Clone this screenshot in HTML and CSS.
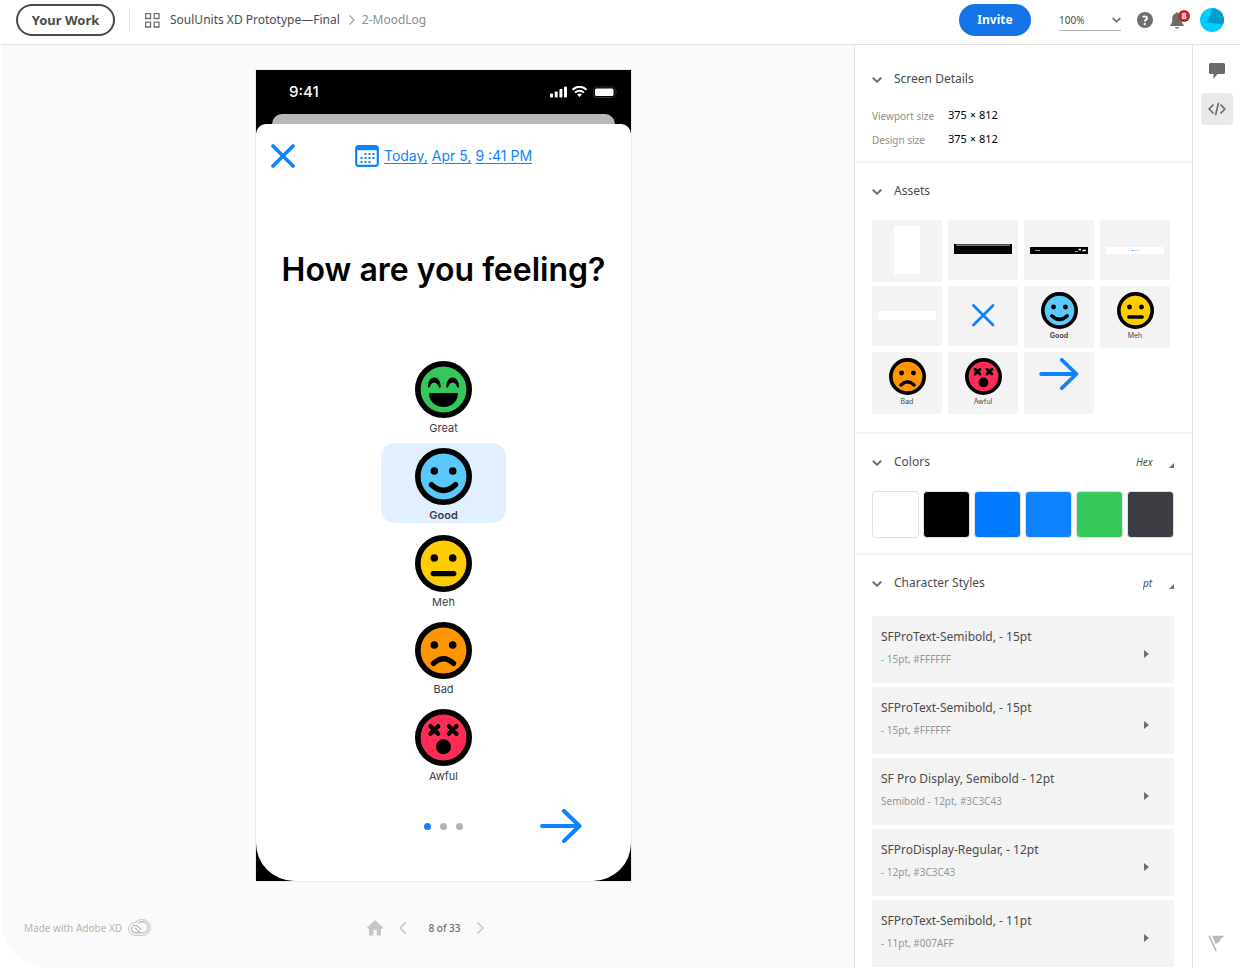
FILE: index.html
```html
<!DOCTYPE html>
<html lang="en">
<head>
<meta charset="utf-8">
<meta name="viewport" content="width=device-width, initial-scale=1">
<title>SoulUnits XD Prototype—Final</title>
<link rel="stylesheet" href="styles.css">
</head>
<body>
<svg class="sprite" aria-hidden="true">
  <symbol id="face-great" viewBox="0 0 57 57">
    <circle cx="28.5" cy="28.5" r="25.7" fill="#34c759" stroke="#000" stroke-width="5.6"/>
    <path d="M13 25.500C13 20 16 16.600 19.300 16.600S25.700 20 25.700 25.500c.1 1.600-1.200 1.600-2 .2-2-5.600-6.800-5.600-8.800 0-.7 1.400-2 1.400-1.900-.2zM31.300 25.500c0-5.500 3-8.900 6.300-8.900s6.400 3.400 6.400 8.900c.1 1.600-1.200 1.600-2 .2-2-5.600-6.800-5.600-8.800 0-.7 1.400-2 1.400-1.900-.2z"/>
    <path d="M15.500 32h26a1.500 1.500 0 0 1 1.500 1.800C42 41 36.500 46 28.500 46S15 41 14 33.800a1.500 1.500 0 0 1 1.500-1.800z"/>
  </symbol>
  <symbol id="face-good" viewBox="0 0 57 57">
    <circle cx="28.5" cy="28.5" r="25.7" fill="#5ac8fa" stroke="#000" stroke-width="5.6"/>
    <circle cx="19.300" cy="23" r="3.800"/><circle cx="37.700" cy="23" r="3.800"/>
    <path d="M16.500 36.700q12 11.200 24 0" fill="none" stroke="#000" stroke-width="5.400" stroke-linecap="round"/>
  </symbol>
  <symbol id="face-meh" viewBox="0 0 57 57">
    <circle cx="28.5" cy="28.5" r="25.7" fill="#ffcc00" stroke="#000" stroke-width="5.6"/>
    <circle cx="19.300" cy="23" r="3.800"/><circle cx="37.700" cy="23" r="3.800"/>
    <path d="M18.200 38.600h20.600" stroke="#000" stroke-width="5.200" stroke-linecap="round"/>
  </symbol>
  <symbol id="face-bad" viewBox="0 0 57 57">
    <circle cx="28.5" cy="28.5" r="25.7" fill="#ff9500" stroke="#000" stroke-width="5.6"/>
    <circle cx="19.300" cy="23" r="3.800"/><circle cx="37.700" cy="23" r="3.800"/>
    <path d="M18.300 41.500q10.200-9.600 20.400 0" fill="none" stroke="#000" stroke-width="5.200" stroke-linecap="round"/>
  </symbol>
  <symbol id="face-awful" viewBox="0 0 57 57">
    <circle cx="28.5" cy="28.5" r="25.7" fill="#ff2d55" stroke="#000" stroke-width="5.6"/>
    <path d="M15.500 17.200l7.600 7.600m0-7.600l-7.600 7.600M33.900 17.200l7.600 7.600m0-7.600l-7.600 7.600" stroke="#000" stroke-width="4.400" stroke-linecap="round"/>
    <circle cx="28.500" cy="37.700" r="7.500"/>
  </symbol>
  <symbol id="cross" viewBox="0 0 24 24"><path d="M2 2l20 20M22 2L2 22" fill="none" stroke="#0f82ff" stroke-width="3.600" stroke-linecap="round"/></symbol>
  <symbol id="arrow" viewBox="0 0 42 34"><path d="M2 17h37M24 2l15.500 15L24 32" fill="none" stroke="#0f82ff" stroke-width="4" stroke-linecap="round" stroke-linejoin="round"/></symbol>
  <symbol id="chevron" viewBox="0 0 10 6"><path d="M.8.8L5 4.800 9.200.8" fill="none" stroke="currentColor" stroke-width="1.900"/></symbol>
</svg>

<div class="app">
  <header class="topbar">
    <button class="pill pill-outline" type="button">Your Work</button>
    <span class="divider"></span>
    <nav class="crumbs" aria-label="Breadcrumb">
      <button class="icon-button" type="button" aria-label="All screens">
        <svg width="15" height="15" viewBox="0 0 15 15" fill="none" stroke="#6e6e6e" stroke-width="1.300"><path d="M.7.700h4.800v4.800H.7zM9.200.700H14v4.800H9.200zM.7 9.200h4.800V14H.7zM9.200 9.200H14V14H9.200z"/></svg>
      </button>
      <a href="#project">SoulUnits XD Prototype—Final</a>
      <svg width="6" height="10" viewBox="0 0 6 10" fill="none" stroke="#a0a0a0" stroke-width="1.200"><path d="M.5.500L5 5 .5 9.500"/></svg>
      <span class="crumb-current">2-MoodLog</span>
    </nav>
    <div class="top-actions">
      <button class="pill pill-primary" type="button">Invite</button>
      <label class="zoom">
        <select aria-label="Zoom"><option>100%</option></select>
        <svg width="9" height="6"><use href="#chevron"/></svg>
      </label>
      <button class="icon-button" type="button" aria-label="Help">
        <svg width="16" height="16" viewBox="0 0 16 16"><circle cx="8" cy="8" r="8" fill="#6e6e6e"/><path d="M5.700 5.100C6.700 4.200 9.800 3.700 10 6c.1 1.500-2.200 1.900-2.200 3.600" fill="none" stroke="#fff" stroke-width="1.900"/><circle cx="7.800" cy="12.100" r="1.200" fill="#fff"/></svg>
      </button>
      <button class="icon-button bell" type="button" aria-label="Notifications">
        <svg width="14" height="17" viewBox="0 0 14 17" fill="#6e6e6e"><path d="M6 1.200a1 1 0 0 1 2 0C10.800 1.800 11.700 4 11.700 6.500c0 4 .8 5.300 2.100 6.400v1H.2v-1c1.300-1.100 2.100-2.400 2.100-6.400C2.300 4 3.200 1.800 6 1.200zM5 15h4c-.3 1-1.100 1.500-2 1.500S5.300 16 5 15z"/></svg>
        <span class="badge">8</span>
      </button>
      <button class="icon-button" type="button" aria-label="Account">
        <svg width="24" height="24" viewBox="0 0 24 24"><clipPath id="avatar-clip"><circle cx="12" cy="12" r="12"/></clipPath><g clip-path="url(#avatar-clip)"><path fill="#00cdff" d="M0 0h24v24H0z"/><path fill="#009fc7" d="M7 14.500L12.500 0H24v16.500z"/><path fill="#17b0d4" d="M12.500 0H24v7z"/></g></svg>
      </button>
    </div>
  </header>

  <div class="workspace">
    <main class="canvas">
      <div class="stage">
        <article class="phone">
          <div class="status">
            <span>9:41</span>
            <svg width="67" height="12" viewBox="0 0 67 12" fill="#fff">
              <rect x="0" y="7.500" width="3" height="4" rx=".8"/><rect x="4.700" y="5.500" width="3" height="6" rx=".8"/><rect x="9.400" y="3" width="3" height="8.500" rx=".8"/><rect x="14" y=".5" width="3" height="11" rx=".8"/>
              <path d="M22.500 3.800q7-6.200 14 0M25 6.600q4.500-3.900 9 0" fill="none" stroke="#fff" stroke-width="1.900"/><path d="M27 8.400q2.500-1.800 5 0L29.500 11z"/>
              <rect x="43.500" y="1" width="21.500" height="10.500" rx="2.600" fill="none" stroke="#333"/><rect x="45" y="2.500" width="18.500" height="7.500" rx="1.500"/><path d="M66 4.500q1.200 1.500 0 3z" fill="#555"/>
            </svg>
          </div>
          <div class="peek"></div>
          <div class="sheet">
            <div class="sheet-top">
              <button class="icon-button" type="button" aria-label="Close"><svg width="24" height="24"><use href="#cross"/></svg></button>
              <a class="date" href="#date">
                <svg width="24" height="22" viewBox="0 0 24 22"><rect x="1.200" y="1.200" width="21.600" height="19.600" rx="2.600" fill="#fff" stroke="#0f82ff" stroke-width="2.200"/><path d="M1 5.200V3a2 2 0 0 1 2-2h18a2 2 0 0 1 2 2v2.200z" fill="#0f82ff"/><path d="M9.500 9h10.500M5.500 13h14.500M5.500 17h10.500" stroke="#0f82ff" stroke-width="2" stroke-dasharray="2 2"/></svg>
                <span>Today,</span><span>Apr 5,</span><span>9 :41 PM</span>
              </a>
            </div>
            <h1>How are you feeling?</h1>
            <div class="moods">
              <button class="mood" type="button"><svg><use href="#face-great"/></svg>Great</button>
              <button class="mood mood-selected" type="button" aria-pressed="true"><svg><use href="#face-good"/></svg>Good</button>
              <button class="mood" type="button"><svg><use href="#face-meh"/></svg>Meh</button>
              <button class="mood" type="button"><svg><use href="#face-bad"/></svg>Bad</button>
              <button class="mood" type="button"><svg><use href="#face-awful"/></svg>Awful</button>
            </div>
            <div class="sheet-bottom">
              <div class="dots"><i class="dot dot-on"></i><i class="dot"></i><i class="dot"></i></div>
              <button class="icon-button next" type="button" aria-label="Next"><svg width="42" height="34"><use href="#arrow"/></svg></button>
            </div>
          </div>
        </article>
      </div>
      <footer class="canvas-footer">
        <a class="made-with" href="#xd">Made with Adobe XD
          <svg width="23" height="17" viewBox="0 0 23 17" fill="none" stroke="#b3b3b3" stroke-width=".8"><path d="M7 16.300A6.300 6.300 0 0 1 .6 10 6.300 6.300 0 0 1 7 3.600 8.300 8.300 0 0 1 14.300.6a7.800 7.800 0 0 1 8.100 7.900 7.800 7.800 0 0 1-7.900 7.800z"/><path d="M12.800 13.600H7.400A3.700 3.700 0 0 1 3.500 10 3.700 3.700 0 0 1 7.300 6.200c1 0 1.900.4 2.600 1.100l3.400 3.500" stroke-width="1.100"/><path d="M10 4.500a5.500 5.500 0 0 1 4.500-1.900 5.700 5.700 0 0 1 5.800 5.800 5.600 5.600 0 0 1-5.600 5.600c-1.700 0-3-.6-4-1.700L6.800 8.700" stroke-width="1.100"/></svg>
        </a>
        <nav class="pager" aria-label="Screens">
          <button class="icon-button" type="button" aria-label="Home"><svg width="16" height="16" viewBox="0 0 16 16" fill="#c6c6c6"><path d="M8 0l8 7.500-.6 1.300H14V15.500H9.700V10H6.300v5.500H2V8.800H.6L0 7.500z"/></svg></button>
          <button class="icon-button" type="button" aria-label="Previous"><svg width="7" height="12" viewBox="0 0 7 12" fill="none" stroke="#c2c2c2" stroke-width="1.500"><path d="M6.500.500L1 6l5.500 5.500"/></svg></button>
          <span class="pager-count">8 of 33</span>
          <button class="icon-button" type="button" aria-label="Following"><svg width="7" height="12" viewBox="0 0 7 12" fill="none" stroke="#c2c2c2" stroke-width="1.500"><path d="M.5.500L6 6 .5 11.500"/></svg></button>
        </nav>
      </footer>
    </main>

    <aside class="panel">
      <section class="section section-first">
        <div class="section-head"><button class="toggle" type="button"><svg width="10" height="6"><use href="#chevron"/></svg>Screen Details</button></div>
        <dl class="sizes">
          <dt>Viewport size</dt><dd>375 × 812</dd>
          <dt>Design size</dt><dd>375 × 812</dd>
        </dl>
      </section>

      <section class="section">
        <div class="section-head"><button class="toggle" type="button"><svg width="10" height="6"><use href="#chevron"/></svg>Assets</button></div>
        <ul class="assets">
          <li class="tile tile-tall tile-top"><svg width="26" height="48"><rect width="26" height="48" fill="#fff"/></svg></li>
          <li class="tile"><svg width="58" height="12"><path d="M0 0h58v10H0z"/><path d="M2 .5h54v1.200H2z" fill="#999"/></svg></li>
          <li class="tile"><svg width="58" height="7"><path d="M0 0h58v7H0z"/><path d="M5 3.500h5M45 4.500h3" stroke="#999" stroke-width="1.200"/><path d="M48.500 2.500h2.500M52.500 3.500h3.500" stroke="#fff" stroke-width="1.400"/></svg></li>
          <li class="tile"><svg width="58" height="7"><path d="M0 0h58v7H0z" fill="#fff"/><path d="M26 3.500h1.200" stroke="#0f82ff" stroke-width="1.200"/><path d="M28.500 3.500h1.200M31 3.500h1.200" stroke="#aaa" stroke-width="1.200"/></svg></li>
          <li class="tile"><svg width="58" height="10"><rect width="58" height="9" fill="#fff"/></svg></li>
          <li class="tile"><svg width="24" height="24" viewBox="0 0 24 24"><path d="M2.500 1.500l19.500 19.500M22 1.500L2.500 21" stroke="#0f82ff" stroke-width="2.800" stroke-linecap="round"/></svg></li>
          <li class="tile tile-tall tile-top"><svg class="mini-face"><use href="#face-good"/></svg><b>Good</b></li>
          <li class="tile tile-tall tile-top"><svg class="mini-face"><use href="#face-meh"/></svg><span>Meh</span></li>
          <li class="tile tile-tall tile-top"><svg class="mini-face"><use href="#face-bad"/></svg><span>Bad</span></li>
          <li class="tile tile-tall tile-top"><svg class="mini-face"><use href="#face-awful"/></svg><span>Awful</span></li>
          <li class="tile tile-tall tile-top"><svg width="40" height="32"><use href="#arrow"/></svg></li>
        </ul>
      </section>

      <section class="section">
        <div class="section-head">
          <button class="toggle" type="button"><svg width="10" height="6"><use href="#chevron"/></svg>Colors</button>
          <label class="unit"><select aria-label="Color format"><option>Hex</option></select><svg width="5" height="5"><path d="M5 0v5H0z" fill="#6e6e6e"/></svg></label>
        </div>
        <ul class="swatches">
          <li class="swatch white"></li><li class="swatch black"></li><li class="swatch blue"></li><li class="swatch sky"></li><li class="swatch green"></li><li class="swatch graphite"></li>
        </ul>
      </section>

      <section class="section section-last">
        <div class="section-head">
          <button class="toggle" type="button"><svg width="10" height="6"><use href="#chevron"/></svg>Character Styles</button>
          <label class="unit"><select aria-label="Text unit"><option>pt</option></select><svg width="5" height="5"><path d="M5 0v5H0z" fill="#6e6e6e"/></svg></label>
        </div>
        <div class="styles">
          <button class="style" type="button"><span><strong>SFProText-Semibold, - 15pt</strong><small>- 15pt, #FFFFFF</small></span><svg width="5" height="8"><path d="M0 0l5 4-5 4z" fill="#6e6e6e"/></svg></button>
          <button class="style" type="button"><span><strong>SFProText-Semibold, - 15pt</strong><small>- 15pt, #FFFFFF</small></span><svg width="5" height="8"><path d="M0 0l5 4-5 4z" fill="#6e6e6e"/></svg></button>
          <button class="style" type="button"><span><strong>SF Pro Display, Semibold - 12pt</strong><small>Semibold - 12pt, #3C3C43</small></span><svg width="5" height="8"><path d="M0 0l5 4-5 4z" fill="#6e6e6e"/></svg></button>
          <button class="style" type="button"><span><strong>SFProDisplay-Regular, - 12pt</strong><small>- 12pt, #3C3C43</small></span><svg width="5" height="8"><path d="M0 0l5 4-5 4z" fill="#6e6e6e"/></svg></button>
          <button class="style" type="button"><span><strong>SFProText-Semibold, - 11pt</strong><small>- 11pt, #007AFF</small></span><svg width="5" height="8"><path d="M0 0l5 4-5 4z" fill="#6e6e6e"/></svg></button>
        </div>
      </section>
    </aside>

    <nav class="rail" aria-label="Tools">
      <button class="rail-button" type="button" aria-label="Comments"><svg width="16" height="16" viewBox="0 0 16 16"><path d="M1.500 0h13A1.500 1.500 0 0 1 16 1.500v8a1.500 1.500 0 0 1-1.500 1.500H8.500L4.500 16v-5h-3A1.500 1.500 0 0 1 0 9.500v-8A1.500 1.500 0 0 1 1.500 0z" fill="#6a6a6a"/></svg></button>
      <button class="rail-button rail-active" type="button" aria-label="Specs"><svg width="18" height="14" viewBox="0 0 18 14" fill="none" stroke="#6e6e6e" stroke-width="1.700"><path d="M5.500 2.500L1.200 7l4.300 4.500M12.500 2.500L16.800 7l-4.300 4.500M10.500.800L7.500 13.200"/></svg></button>
      <button class="icon-button flag" type="button" aria-label="Report"><svg width="17" height="17" viewBox="0 0 17 17"><path d="M4 .8h12.500l-4.200 3.400-.3 2.300L7.700 9z" fill="#b8b8b8"/><path d="M1 .8l7.300 15.400" stroke="#b0b0b0" stroke-width="1.500"/></svg></button>
    </nav>
  </div>
</div>
</body>
</html>
```

FILE: styles.css
```css
*, *::before, *::after { box-sizing: border-box; }

body {
  margin: 0;
  background: #fff;
  color: #4b4b4b;
  font: 12px/20px "Noto Sans", "Open Sans", sans-serif;
}

button, select { font: inherit; color: inherit; background: none; border: 0; padding: 0; margin: 0; }
select { appearance: none; }
a { color: inherit; text-decoration: none; }
ul, dl, dd { margin: 0; padding: 0; list-style: none; }
svg { display: block; flex: none; }
.sprite { position: absolute; width: 0; height: 0; }

.icon-button { display: flex; align-items: center; justify-content: center; }

.app { display: flex; flex-direction: column; height: 100vh; padding: 0 0 1px 1px; overflow: hidden; }

/* Top bar */
.topbar {
  display: flex;
  align-items: center;
  flex: none;
  height: 45px;
  padding: 0 16px 4px 15px;
  border-bottom: 1px solid #e1e1e1;
}
.pill { height: 32px; border-radius: 16px; font-size: 13px; font-weight: 700; }
.pill-outline { border: 2px solid #4b4b4b; min-width: 99px; }
.pill-primary { background: #1473e6; color: #fff; font-size: 12px; min-width: 72px; }
.divider { width: 1px; height: 24px; margin: 0 15px 0 14px; background: #e1e1e1; }
.crumbs { display: flex; align-items: center; }
.crumbs a { margin: 0 9px 0 10px; }
.crumb-current { margin-left: 7px; color: #8e8e8e; }
.top-actions { display: flex; align-items: center; margin-left: auto; }
.zoom { display: grid; align-items: center; width: 62px; margin: 0 16px 0 28px; border-bottom: 1px solid #b3b3b3; font-size: 10px; }
.zoom select, .zoom svg { grid-area: 1 / 1; }
.zoom select { width: 100%; height: 20px; }
.zoom svg { justify-self: end; pointer-events: none; color: #6e6e6e; }
.bell { position: relative; margin: 0 16px 0 17px; }
.badge {
  position: absolute;
  top: -2px;
  left: 8px;
  width: 12px;
  height: 12px;
  border-radius: 6px;
  background: #c9252d;
  color: #fff;
  font-size: 9px;
  font-weight: 700;
  line-height: 12px;
}

.workspace { display: flex; flex: 1; min-height: 0; }

/* Canvas */
.canvas {
  display: flex;
  flex-direction: column;
  flex: 1;
  min-width: 0;
  padding-top: 25px;
  background: #fafafa;
  border-bottom-left-radius: 48px;
}
.stage { display: flex; justify-content: center; padding-left: 32px; }
.phone {
  width: 375px;
  background: #000;
  outline: 1px solid #ececec;
  font-family: Inter, "Liberation Sans", sans-serif;
}
.status {
  display: flex;
  align-items: center;
  justify-content: space-between;
  height: 44px;
  padding: 0 14px 0 33px;
  color: #fff;
  font-size: 15px;
  font-weight: 500;
}
.peek { height: 10px; margin: 0 16px; border-radius: 10px 10px 0 0; background: #b8b8b8; }
.sheet { padding: 20px 0; background: #fff; border-radius: 10px 10px 38px 38px; }
.sheet-top { display: grid; grid-template-columns: 1fr auto 1fr; align-items: center; height: 24px; padding: 0 15px; }
.sheet-top .icon-button { justify-self: start; }
.date { display: flex; align-items: center; gap: 4px; color: #0f82ff; font-size: 14px; font-weight: 400; }
.date svg { margin-right: 1px; }
.date span { text-decoration: underline; text-decoration-thickness: 1px; text-underline-offset: 2px; }
h1 { margin: 81px 0 65px; color: #000; font-size: 32px; font-weight: 600; line-height: 42px; text-align: center; white-space: nowrap; }
.moods { display: flex; flex-direction: column; align-items: center; gap: 7px; }
.mood {
  display: flex;
  flex-direction: column;
  align-items: center;
  gap: 1px;
  width: 125px;
  height: 80px;
  padding-top: 5px;
  border-radius: 14px;
  color: #3c3c43;
  font-size: 11px;
  line-height: 18px;
}
.mood svg { width: 57px; height: 57px; }
.mood-selected { background: #e2efff; font-weight: 600; }
.sheet-bottom { display: grid; grid-template-columns: 1fr auto 1fr; align-items: center; height: 34px; margin: 25px 0 18px; padding: 0 49px; }
.dots { grid-column: 2; display: flex; gap: 9px; }
.dot { width: 7px; height: 7px; border-radius: 50%; background: #b3b3b3; }
.dot-on { background: #0f82ff; }
.next { justify-self: end; }

.canvas-footer {
  display: grid;
  grid-template-columns: 1fr auto 1fr;
  align-items: center;
  flex: 1;
  padding: 6px 27px 0 23px;
}
.made-with { display: flex; align-items: center; gap: 6px; color: #b3b3b3; font-size: 10px; }
.pager { display: flex; align-items: center; color: #6e6e6e; font-size: 10px; font-weight: 500; }
.pager-count { margin: 0 16px 0 22px; }
.pager .icon-button:first-child { margin-right: 16px; }

/* Inspector panel */
.panel { flex: none; width: 338px; border-left: 1px solid #e1e1e1; overflow: hidden; }
.section { padding: 18px 18px 0 17px; border-bottom: 2px solid #f3f3f3; }
.section-first { padding-top: 24px; }
.section-last { border-bottom: 0; }
.section-head { display: flex; align-items: center; justify-content: space-between; height: 20px; }
.toggle { display: flex; align-items: center; gap: 12px; }
.toggle svg { color: #6e6e6e; margin-top: 2px; }
.sizes { display: grid; grid-template-columns: 76px 1fr; padding: 14px 0 10px; line-height: 24px; font-size: 11px; }
.sizes dt { font-size: 10px; color: #8e8e8e; padding-top: 1px; height: 24px; }
.sizes dd { color: #000; }

.assets { display: grid; grid-template-columns: repeat(4, 70px); grid-auto-rows: 60px; gap: 6px; padding: 19px 0 20px; }
.tile {
  display: flex;
  flex-direction: column;
  align-items: center;
  justify-content: center;
  height: 60px;
  border-radius: 2px;
  background: #f3f3f3;
  color: #4b4b4b;
  font: 7px/13px Inter, "Liberation Sans", sans-serif;
}
.tile-tall { height: 62px; }
.tile-top { justify-content: flex-start; padding-top: 6px; }
.mini-face { width: 37px; height: 37px; }

.unit { display: flex; align-items: center; gap: 16px; font-size: 10px; font-style: italic; }
.unit svg { align-self: end; margin-bottom: 4px; }
.swatches { display: grid; grid-template-columns: repeat(6, 1fr); gap: 4px; padding: 19px 0 15px; }
.swatch { height: 47px; border: 1px solid #e1e1e1; border-radius: 4px; }
.white { background: #fff; }
.black { background: #000; }
.blue { background: #007aff; }
.sky { background: #0f82ff; }
.green { background: #34c759; }
.graphite { background: #3c3c43; }

.styles { display: grid; gap: 4px; padding-top: 23px; }
.style {
  display: flex;
  align-items: center;
  justify-content: space-between;
  height: 67px;
  padding: 0 25px 0 9px;
  border-radius: 2px;
  background: #f3f3f3;
  text-align: left;
}
.style svg { margin-top: 8px; }
.style span { padding-bottom: 3px; }
.style strong, .style small { display: block; line-height: 22px; }
.style strong { font-size: 12px; font-weight: 400; }
.style small { font-size: 10px; color: #959595; }

/* Tool rail */
.rail { display: flex; flex-direction: column; align-items: center; flex: none; width: 48px; padding: 10px 0 16px; border-left: 1px solid #e1e1e1; }
.rail-button { display: flex; align-items: center; justify-content: center; width: 32px; height: 32px; margin-bottom: 6px; border-radius: 4px; }
.rail-active { background: #e9e9e9; }
.flag { margin-top: auto; }
```
